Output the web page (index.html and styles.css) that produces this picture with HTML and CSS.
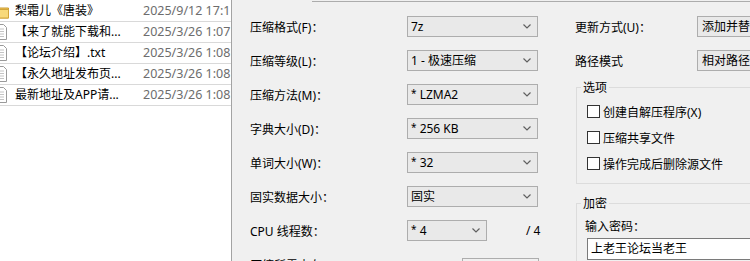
FILE: index.html
```html
<!DOCTYPE html>
<html lang="zh-CN">
<head>
<meta charset="utf-8">
<link rel="stylesheet" href="styles.css">
</head>
<body>
<div class="app">
  <div class="files">
    <div class="row">
      <span class="ico"><svg width="16" height="16" viewBox="0 0 16 16"><path d="M0.5 3.5h5l1.5 1.5h8.5v10h-15z" fill="#f3c95c" stroke="#c99a2e"/><path d="M0.5 6.5h15v8.5h-15z" fill="#f8d97a" stroke="#d2a53a"/></svg></span>
      <span class="name">梨霜儿《唐装》</span><span class="date">2025/9/12 17:1</span>
    </div>
    <div class="row">
      <span class="ico"><svg width="16" height="16" viewBox="0 0 16 16"><path d="M2.5 0.5h8l3 3v12h-11z" fill="#fff" stroke="#9a9a9a"/><path d="M4 5h7M4 7.5h7M4 10h7M4 12.5h7" stroke="#c4c4c4"/></svg></span>
      <span class="name">【来了就能下载和...</span><span class="date">2025/3/26 1:07</span>
    </div>
    <div class="row">
      <span class="ico"><svg width="16" height="16" viewBox="0 0 16 16"><path d="M2.5 0.5h8l3 3v12h-11z" fill="#fff" stroke="#9a9a9a"/><path d="M4 5h7M4 7.5h7M4 10h7M4 12.5h7" stroke="#c4c4c4"/></svg></span>
      <span class="name">【论坛介绍】.txt</span><span class="date">2025/3/26 1:08</span>
    </div>
    <div class="row">
      <span class="ico"><svg width="16" height="16" viewBox="0 0 16 16"><path d="M2.5 0.5h8l3 3v12h-11z" fill="#fff" stroke="#9a9a9a"/><path d="M4 5h7M4 7.5h7M4 10h7M4 12.5h7" stroke="#c4c4c4"/></svg></span>
      <span class="name">【永久地址发布页...</span><span class="date">2025/3/26 1:08</span>
    </div>
    <div class="row">
      <span class="ico"><svg width="16" height="16" viewBox="0 0 16 16"><path d="M2.5 0.5h8l3 3v12h-11z" fill="#fff" stroke="#9a9a9a"/><path d="M4 5h7M4 7.5h7M4 10h7M4 12.5h7" stroke="#c4c4c4"/></svg></span>
      <span class="name">最新地址及APP请...</span><span class="date">2025/3/26 1:08</span>
    </div>
  </div>

  <div class="dialog">
    <div class="pathbox"></div>
    <div class="cols">
      <div class="left">
        <div class="lbl">压缩格式(F)：</div>
        <div class="combo"><span>7z</span><svg class="arr" width="8" height="5" viewBox="0 0 8 5"><path d="M0.5 0.5l3.5 3.5 3.5-3.5" fill="none" stroke="#606060" stroke-width="1.2"/></svg></div>

        <div class="lbl">压缩等级(L)：</div>
        <div class="combo"><span>1 - 极速压缩</span><svg class="arr" width="8" height="5" viewBox="0 0 8 5"><path d="M0.5 0.5l3.5 3.5 3.5-3.5" fill="none" stroke="#606060" stroke-width="1.2"/></svg></div>

        <div class="lbl">压缩方法(M)：</div>
        <div class="combo"><span><sup class="star">*</sup> LZMA2</span><svg class="arr" width="8" height="5" viewBox="0 0 8 5"><path d="M0.5 0.5l3.5 3.5 3.5-3.5" fill="none" stroke="#606060" stroke-width="1.2"/></svg></div>

        <div class="lbl">字典大小(D)：</div>
        <div class="combo"><span><sup class="star">*</sup> 256 KB</span><svg class="arr" width="8" height="5" viewBox="0 0 8 5"><path d="M0.5 0.5l3.5 3.5 3.5-3.5" fill="none" stroke="#606060" stroke-width="1.2"/></svg></div>

        <div class="lbl">单词大小(W)：</div>
        <div class="combo"><span><sup class="star">*</sup> 32</span><svg class="arr" width="8" height="5" viewBox="0 0 8 5"><path d="M0.5 0.5l3.5 3.5 3.5-3.5" fill="none" stroke="#606060" stroke-width="1.2"/></svg></div>

        <div class="lbl">固实数据大小：</div>
        <div class="combo"><span>固实</span><svg class="arr" width="8" height="5" viewBox="0 0 8 5"><path d="M0.5 0.5l3.5 3.5 3.5-3.5" fill="none" stroke="#606060" stroke-width="1.2"/></svg></div>

        <div class="lbl">CPU 线程数：</div>
        <div class="cpu">
          <div class="combo small"><span><sup class="star">*</sup> 4</span><svg class="arr" width="8" height="5" viewBox="0 0 8 5"><path d="M0.5 0.5l3.5 3.5 3.5-3.5" fill="none" stroke="#606060" stroke-width="1.2"/></svg></div>
          <span class="of">/ 4</span>
        </div>

        <div class="lbl">压缩所需内存：</div>
        <div class="membox"></div>
      </div>

      <div class="right">
        <div class="rrow">
          <div class="rlbl">更新方式(U)：</div>
          <div class="combo wide"><span>添加并替换文件</span></div>
        </div>
        <div class="rrow">
          <div class="rlbl">路径模式</div>
          <div class="combo wide"><span>相对路径</span></div>
        </div>

        <fieldset class="group opts">
          <legend>选项</legend>
          <label class="chk"><span class="box"></span>创建自解压程序(X)</label>
          <label class="chk"><span class="box"></span>压缩共享文件</label>
          <label class="chk"><span class="box"></span>操作完成后删除源文件</label>
        </fieldset>

        <fieldset class="group enc">
          <legend>加密</legend>
          <div class="pwlbl">输入密码：</div>
          <div class="pw">上老王论坛当老王</div>
        </fieldset>
      </div>
    </div>
  </div>
</div>
</body>
</html>
```

FILE: styles.css
```css
* { box-sizing: border-box; }

html, body {
  margin: 0;
  padding: 0;
  width: 750px;
  height: 261px;
  overflow: hidden;
  background: #f0f0f0;
}

body {
  font-family: "Noto Sans", "Noto Sans CJK SC", sans-serif;
  font-size: 12px;
  color: #000;
}

.app {
  display: flex;
  width: 750px;
  height: 261px;
}

/* file list */
.files {
  width: 232px;
  flex: none;
  height: 261px;
  background: #fff;
  border-right: 1px solid #a3a3a3;
  padding-top: 1px;
  overflow: hidden;
}

.row {
  display: flex;
  align-items: center;
  height: 21px;
  border-bottom: 1px solid #d9d9d9;
  white-space: nowrap;
}

.ico {
  display: flex;
  width: 16px;
  height: 16px;
  margin-left: -7px;
  flex: none;
}

.name {
  width: 128px;
  margin-left: 6px;
  flex: none;
  overflow: hidden;
  line-height: 16px;
}

.date {
  color: #6d6d6d;
  font-size: 12.5px;
  flex: none;
  line-height: 16px;
}

/* dialog */
.dialog {
  flex: 1;
  min-width: 0;
  overflow: hidden;
}

.pathbox {
  height: 2px;
  margin-left: 80px;
  border-bottom: 1px solid #acacac;
}

.cols {
  display: flex;
  margin-top: 14px;
  padding-left: 18px;
}

.left {
  display: grid;
  grid-template-columns: 157px 131px;
  grid-auto-rows: 21px;
  row-gap: 13px;
  flex: none;
}

.lbl {
  display: flex;
  align-items: center;
  white-space: nowrap;
}

.combo {
  display: flex;
  align-items: center;
  height: 21px;
  border: 1px solid #adadad;
  background: #e9e9e9;
  padding: 0 0 0 3px;
  white-space: nowrap;
  overflow: hidden;
}

.combo span {
  flex: 1;
  line-height: 16px;
}

.arr {
  flex: none;
  margin-right: 6px;
}

.star {
  font-size: 10px;
  line-height: 0;
  vertical-align: 2px;
}

.cpu {
  display: flex;
  align-items: center;
  white-space: nowrap;
}

.combo.small {
  width: 80px;
  flex: none;
}

.of {
  margin-left: 39px;
  flex: none;
}

.membox {
  margin-top: 4px;
  margin-left: 55px;
  width: 77px;
  height: 22px;
  border: 1px solid #adadad;
  background: #f0f0f0;
}

.right {
  margin-left: 37px;
  flex: 1;
  min-width: 0;
}

.rrow {
  display: flex;
  align-items: center;
  height: 21px;
  margin-bottom: 13px;
}

.rrow:nth-child(2) {
  margin-bottom: 0;
}

.rlbl {
  width: 122px;
  flex: none;
  white-space: nowrap;
}

.combo.wide {
  width: 120px;
  flex: none;
  padding-left: 4px;
}

.group {
  margin: 0 0 0 1px;
  border: 1px solid #dcdcdc;
  border-right: none;
  padding: 0 0 0 10px;
  min-width: 0;
}

.group legend {
  padding: 0 2px;
  margin-left: -6px;
  line-height: 17px;
}

.opts {
  margin-top: 8px;
  padding-top: 9px;
  padding-bottom: 13px;
  display: flex;
  flex-direction: column;
  gap: 13px;
}

.chk {
  display: flex;
  align-items: center;
  height: 13px;
  white-space: nowrap;
}

.box {
  width: 13px;
  height: 13px;
  border: 1px solid #333;
  background: #fff;
  margin-right: 3px;
  flex: none;
}

.enc {
  margin-top: 11px;
  padding-top: 6px;
  padding-bottom: 10px;
}

.pwlbl {
  line-height: 17px;
  margin-left: -2px;
}

.pw {
  margin-top: 3px;
  height: 22px;
  border: 1px solid #7a7a7a;
  border-right: none;
  background: #fff;
  padding-left: 3px;
  line-height: 20px;
  white-space: nowrap;
}
```
